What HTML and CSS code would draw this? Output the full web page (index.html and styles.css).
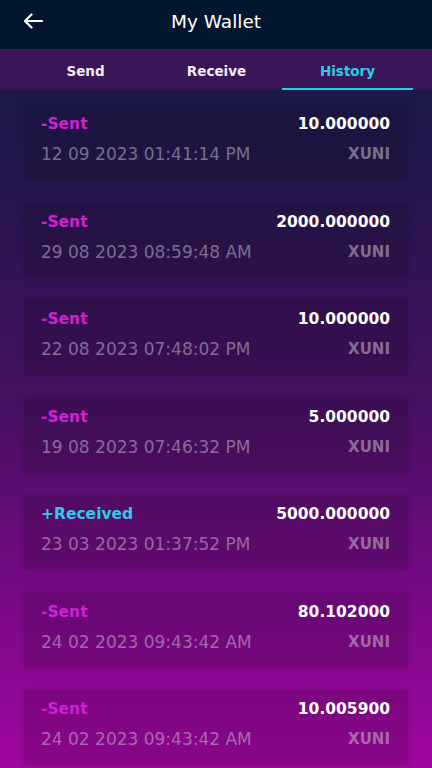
FILE: index.html
```html
<!DOCTYPE html>
<html lang="en">
<head>
    <meta charset="UTF-8">
    <meta name="viewport" content="width=device-width, initial-scale=1.0">
    <title>My Wallet</title>
    <link rel="stylesheet" href="styles.css">
</head>
<body>
    <!-- Top bar -->
    <header class="topbar">
        <button class="back-button" aria-label="Back">
            <svg width="20" height="16" viewBox="0 0 20 16">
                <path d="M19 8H2M8.5 1.5L2 8l6.5 6.5" fill="none" stroke="#fff" stroke-width="2.2" stroke-linecap="round" stroke-linejoin="round"/>
            </svg>
        </button>
        <h1>My Wallet</h1>
    </header>

    <!-- Tabs -->
    <nav class="tabs">
        <div class="tab">Send</div>
        <div class="tab">Receive</div>
        <div class="tab active">History</div>
    </nav>

    <!-- History list -->
    <main class="history">
        <div class="tx">
            <div class="tx-row">
                <span class="tx-type sent">-Sent</span>
                <span class="tx-amount">10.000000</span>
            </div>
            <div class="tx-row sub">
                <span class="tx-date">12 09 2023 01:41:14 PM</span>
                <span class="tx-coin">XUNI</span>
            </div>
        </div>
        <div class="tx">
            <div class="tx-row">
                <span class="tx-type sent">-Sent</span>
                <span class="tx-amount">2000.000000</span>
            </div>
            <div class="tx-row sub">
                <span class="tx-date">29 08 2023 08:59:48 AM</span>
                <span class="tx-coin">XUNI</span>
            </div>
        </div>
        <div class="tx">
            <div class="tx-row">
                <span class="tx-type sent">-Sent</span>
                <span class="tx-amount">10.000000</span>
            </div>
            <div class="tx-row sub">
                <span class="tx-date">22 08 2023 07:48:02 PM</span>
                <span class="tx-coin">XUNI</span>
            </div>
        </div>
        <div class="tx">
            <div class="tx-row">
                <span class="tx-type sent">-Sent</span>
                <span class="tx-amount">5.000000</span>
            </div>
            <div class="tx-row sub">
                <span class="tx-date">19 08 2023 07:46:32 PM</span>
                <span class="tx-coin">XUNI</span>
            </div>
        </div>
        <div class="tx">
            <div class="tx-row">
                <span class="tx-type received">+Received</span>
                <span class="tx-amount">5000.000000</span>
            </div>
            <div class="tx-row sub">
                <span class="tx-date">23 03 2023 01:37:52 PM</span>
                <span class="tx-coin">XUNI</span>
            </div>
        </div>
        <div class="tx">
            <div class="tx-row">
                <span class="tx-type sent">-Sent</span>
                <span class="tx-amount">80.102000</span>
            </div>
            <div class="tx-row sub">
                <span class="tx-date">24 02 2023 09:43:42 AM</span>
                <span class="tx-coin">XUNI</span>
            </div>
        </div>
        <div class="tx">
            <div class="tx-row">
                <span class="tx-type sent">-Sent</span>
                <span class="tx-amount">10.005900</span>
            </div>
            <div class="tx-row sub">
                <span class="tx-date">24 02 2023 09:43:42 AM</span>
                <span class="tx-coin">XUNI</span>
            </div>
        </div>
    </main>
</body>
</html>
```

FILE: styles.css
```css
/* General Styling */
body {
    margin: 0;
    height: 768px;
    overflow: hidden;
    font-family: 'DejaVu Sans', 'Roboto', sans-serif;
    color: white;
    background: linear-gradient(to bottom, #1c1a48 90px, #2e1552 250px, #4a1064 420px, #760a84 590px, #a0079f 768px);
}

/* Top bar */
.topbar {
    height: 49px;
    background: #031630;
    display: flex;
    align-items: center;
    justify-content: center;
    position: relative;
}

.topbar h1 {
    margin: 0 0 6px;
    font-size: 18.5px;
    font-weight: normal;
}

.back-button {
    position: absolute;
    left: 23px;
    top: 13px;
    padding: 0;
    border: none;
    background: none;
    display: flex;
}

/* Tabs */
.tabs {
    height: 41px;
    background: #3a1558;
    display: flex;
    padding: 0 19px 0 20px;
}

.tab {
    flex: 1;
    display: flex;
    align-items: center;
    justify-content: center;
    font-size: 13.5px;
    font-weight: bold;
    color: #f2eef6;
    padding-top: 5px;
    border-bottom: 2px solid transparent;
}

.tab.active {
    color: #29cdea;
    border-bottom-color: #29cdea;
}

/* History list */
.history {
    display: flex;
    flex-direction: column;
    gap: 22.5px;
    padding: 15px 24px 0;
}

.tx {
    height: 75px;
    box-sizing: border-box;
    padding: 9px 18px 0 17px;
    background: rgba(0, 0, 0, 0.13);
    box-shadow: 0 0 6px rgba(0, 0, 0, 0.12);
}

.tx-row {
    display: flex;
    justify-content: space-between;
    align-items: center;
    height: 20px;
}

.tx-row.sub {
    margin-top: 10px;
}

.tx-type, .tx-amount {
    font-size: 15.5px;
    font-weight: bold;
}

.tx-type.sent {
    color: #d21fd8;
}

.tx-type.received {
    color: #29cdea;
}

.tx-date {
    font-size: 17px;
    color: rgba(210, 200, 220, 0.5);
}

.tx-coin {
    font-size: 15px;
    font-weight: bold;
    color: rgba(200, 190, 205, 0.55);
}
```
